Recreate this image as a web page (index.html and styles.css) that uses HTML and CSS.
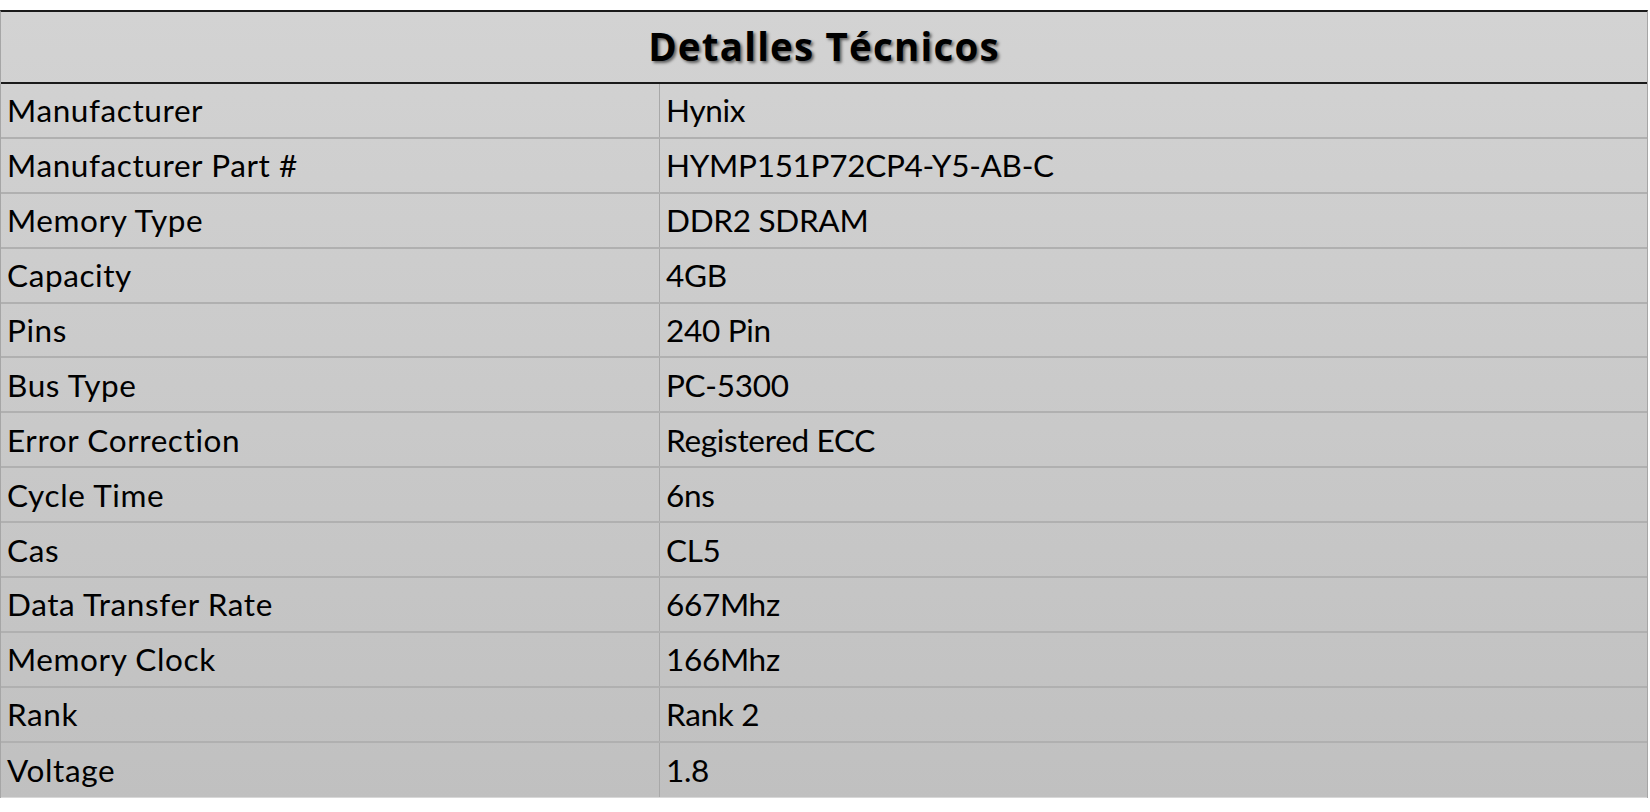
FILE: index.html
```html
<!DOCTYPE html>
<html>
<head>
<meta charset="utf-8">
<title>Detalles Técnicos</title>
<link rel="stylesheet" href="styles.css">
</head>
<body>
<div class="sheet">
  <div class="title">Detalles Técnicos</div>
  <div class="row"><div class="k">Manufacturer</div><div class="v">Hynix</div></div>
  <div class="row"><div class="k">Manufacturer Part #</div><div class="v">HYMP151P72CP4-Y5-AB-C</div></div>
  <div class="row"><div class="k">Memory Type</div><div class="v">DDR2 SDRAM</div></div>
  <div class="row"><div class="k">Capacity</div><div class="v">4GB</div></div>
  <div class="row"><div class="k">Pins</div><div class="v">240 Pin</div></div>
  <div class="row"><div class="k">Bus Type</div><div class="v">PC-5300</div></div>
  <div class="row"><div class="k">Error Correction</div><div class="v">Registered ECC</div></div>
  <div class="row"><div class="k">Cycle Time</div><div class="v">6ns</div></div>
  <div class="row"><div class="k">Cas</div><div class="v">CL5</div></div>
  <div class="row"><div class="k">Data Transfer Rate</div><div class="v">667Mhz</div></div>
  <div class="row"><div class="k">Memory Clock</div><div class="v">166Mhz</div></div>
  <div class="row"><div class="k">Rank</div><div class="v">Rank 2</div></div>
  <div class="row last"><div class="k">Voltage</div><div class="v">1.8</div></div>
</div>
</body>
</html>
```

FILE: styles.css
```css
html, body {
  margin: 0;
  padding: 0;
  background: #ffffff;
}
body {
  padding-top: 10px;
  font-family: "Lato", "Open Sans", sans-serif;
  color: #000;
}
.sheet {
  width: 1648px;
  border-top: 2px solid #1a1a1a;
  border-left: 1px solid #a6a6a6;
  border-right: 1px solid #a6a6a6;
  background: linear-gradient(#d3d3d3, #c0c0c0);
  display: flex;
  flex-direction: column;
  box-sizing: border-box;
}
.title {
  height: 72px;
  border-bottom: 2px solid #1a1a1a;
  display: flex;
  align-items: center;
  justify-content: center;
  font-family: "Open Sans", "Lato", sans-serif;
  font-weight: bold;
  font-size: 38.5px;
  letter-spacing: 1.2px;
  text-shadow: 2px 2px 3px rgba(0,0,0,0.55);
  padding-bottom: 2px;
  box-sizing: border-box;
}
.row {
  display: grid;
  grid-template-columns: 659px 1fr;
  height: 54.9px;
  border-bottom: 2px solid #b0b0b0;
  box-sizing: border-box;
  font-size: 31.5px;
}
.row.last {
  border-bottom: 1px solid #d8d8d8;
}
.k, .v {
  display: flex;
  align-items: center;
  padding-left: 6px;
}
.k {
  border-right: 1px solid #a8a8a8;
  letter-spacing: 0.6px;
}
.v {
  letter-spacing: -0.3px;
}
```
